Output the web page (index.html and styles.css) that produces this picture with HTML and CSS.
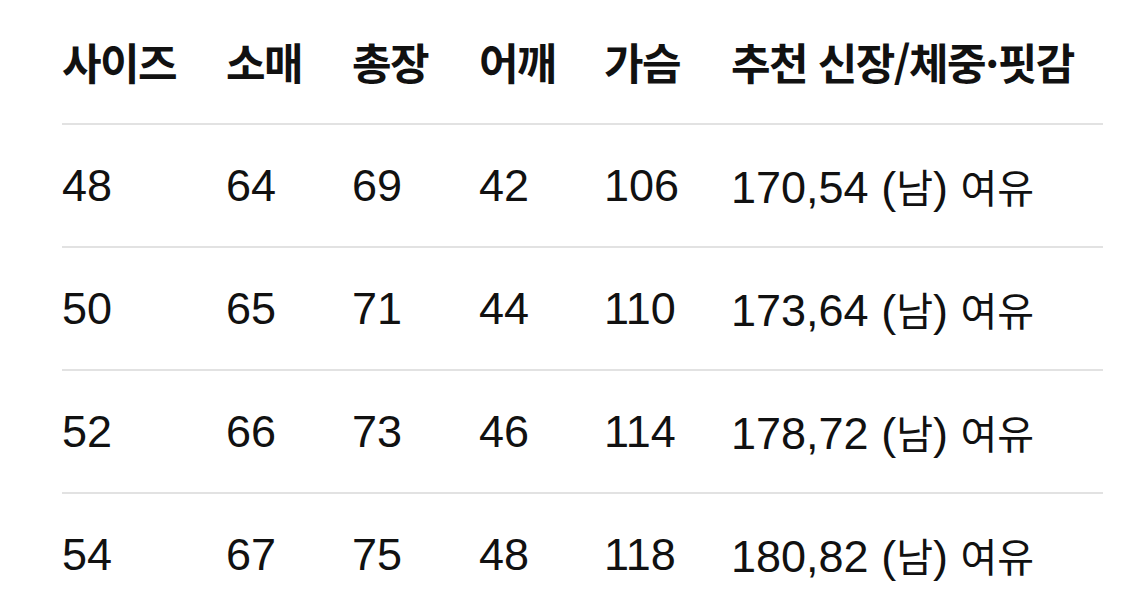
FILE: index.html
```html
<!DOCTYPE html>
<html lang="ko">
<head>
<meta charset="utf-8">
<link rel="stylesheet" href="styles.css">
</head>
<body>
<div class="size-table">
  <div class="row head">
    <div>사이즈</div><div>소매</div><div>총장</div><div>어깨</div><div>가슴</div><div>추천 신장/체중·핏감</div>
  </div>
  <div class="row">
    <div>48</div><div>64</div><div>69</div><div>42</div><div>106</div><div>170,54 (<span class="ko">남</span>) <span class="ko">여유</span></div>
  </div>
  <div class="row">
    <div>50</div><div>65</div><div>71</div><div>44</div><div>110</div><div>173,64 (<span class="ko">남</span>) <span class="ko">여유</span></div>
  </div>
  <div class="row">
    <div>52</div><div>66</div><div>73</div><div>46</div><div>114</div><div>178,72 (<span class="ko">남</span>) <span class="ko">여유</span></div>
  </div>
  <div class="row last">
    <div>54</div><div>67</div><div>75</div><div>48</div><div>118</div><div>180,82 (<span class="ko">남</span>) <span class="ko">여유</span></div>
  </div>
</div>
</body>
</html>
```

FILE: styles.css
```css
html, body {
  margin: 0;
  padding: 0;
  background: #ffffff;
}
body {
  width: 1125px;
  height: 595px;
  overflow: hidden;
  color: #111111;
  font-family: "Liberation Sans", Arial, "Noto Sans CJK KR", sans-serif;
}
.size-table {
  margin-left: 62px;
  width: 1041px;
}
.row {
  display: grid;
  grid-template-columns: 164px 126px 127px 125px 127px 1fr;
  align-items: center;
  height: 121px;
  border-bottom: 2px solid #e2e2e2;
  font-size: 45px;
  white-space: nowrap;
}
.row.head {
  height: 123px;
  font-family: "Noto Sans CJK KR", sans-serif;
  font-weight: 700;
  font-size: 43px;
  letter-spacing: -1.5px;
  line-height: 1;
}
.row.last {
  border-bottom: none;
}
.ko {
  font-family: "Noto Sans CJK KR", sans-serif;
  font-size: 40px;
  letter-spacing: 0;
}
```
